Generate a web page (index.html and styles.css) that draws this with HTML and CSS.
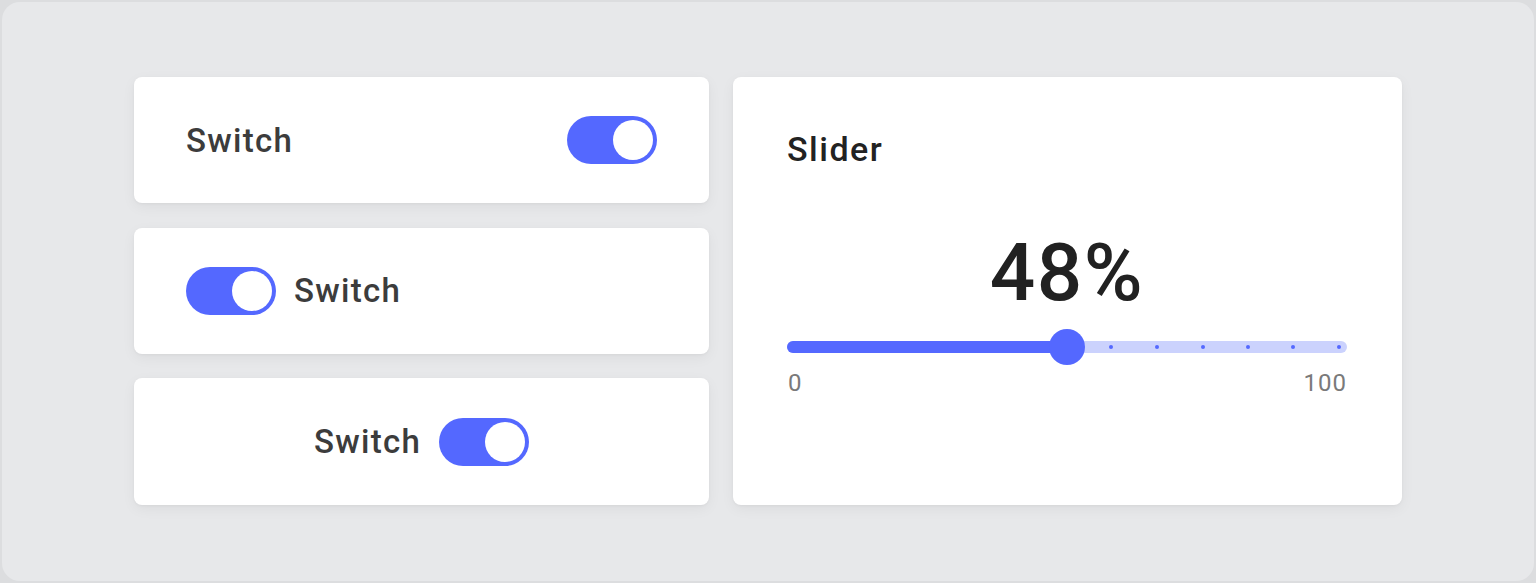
FILE: index.html
```html
<!DOCTYPE html>
<html lang="en">
<head>
<meta charset="utf-8">
<title>Switch and Slider</title>
<link rel="stylesheet" href="styles.css">
</head>
<body>
<div class="frame">
  <div class="layout">
    <div class="column">
      <div class="card row-between">
        <span class="label">Switch</span>
        <span class="toggle"><span class="knob"></span></span>
      </div>
      <div class="card row-start">
        <span class="toggle"><span class="knob"></span></span>
        <span class="label">Switch</span>
      </div>
      <div class="card row-center">
        <span class="label">Switch</span>
        <span class="toggle"><span class="knob"></span></span>
      </div>
    </div>
    <div class="card slider-card">
      <div class="title">Slider</div>
      <div class="value">48%</div>
      <div class="slider">
        <div class="track">
          <div class="fill" style="width: 50%"></div>
          <span class="dot" style="left: 57.9%"></span>
          <span class="dot" style="left: 66.1%"></span>
          <span class="dot" style="left: 74.2%"></span>
          <span class="dot" style="left: 82.3%"></span>
          <span class="dot" style="left: 90.4%"></span>
          <span class="dot" style="left: 98.6%"></span>
          <span class="thumb" style="left: 50%"></span>
        </div>
        <div class="scale"><span>0</span><span>100</span></div>
      </div>
    </div>
  </div>
</div>
</body>
</html>
```

FILE: styles.css
```css
html, body {
  margin: 0;
  padding: 0;
}
body {
  background: #dcdddf;
  font-family: Roboto, "Liberation Sans", Arial, sans-serif;
  width: 1536px;
  height: 583px;
  padding: 2px;
  box-sizing: border-box;
}
.frame {
  height: 579px;
  background: #e7e8ea;
  border-radius: 18px;
  box-sizing: border-box;
  padding: 75px 130px 0 132px;
}
.layout {
  display: flex;
  gap: 24px;
  height: 428px;
}
.column {
  width: 575px;
  display: grid;
  grid-template-rows: 126px 126px 127px;
  row-gap: 24.5px;
}
.card {
  background: #ffffff;
  border-radius: 8px;
  box-shadow: 0 4px 14px rgba(0, 0, 0, 0.05), 0 1px 3px rgba(0, 0, 0, 0.04);
  box-sizing: border-box;
}
.row-between {
  display: flex;
  align-items: center;
  justify-content: space-between;
  padding: 0 52px;
}
.row-start {
  display: flex;
  align-items: center;
  gap: 18px;
  padding: 0 52px;
}
.row-center {
  display: flex;
  align-items: center;
  justify-content: center;
  gap: 18px;
}
.label {
  font-size: 33px;
  font-weight: 500;
  color: #3c3c3c;
  letter-spacing: 1.3px;
}
.toggle {
  width: 90px;
  height: 48px;
  border-radius: 24px;
  background: #5468ff;
  display: flex;
  justify-content: flex-end;
  align-items: center;
  padding: 4px;
  box-sizing: border-box;
}
.knob {
  width: 40px;
  height: 40px;
  border-radius: 50%;
  background: #ffffff;
}
.slider-card {
  width: 669px;
  padding: 52px 55px 0 54px;
}
.title {
  font-size: 34px;
  font-weight: 500;
  color: #222222;
  line-height: 40px;
  letter-spacing: 1.5px;
}
.value {
  text-align: center;
  font-size: 80px;
  font-weight: 500;
  color: #212121;
  line-height: 100px;
  margin-top: 54px;
  letter-spacing: 1.5px;
}
.slider {
  margin-top: 18px;
}
.track {
  position: relative;
  height: 12px;
  border-radius: 6px;
  background: #cbd2fd;
}
.fill {
  height: 12px;
  border-radius: 6px;
  background: #5468ff;
}
.dot {
  position: absolute;
  top: 4px;
  width: 4px;
  height: 4px;
  margin-left: -2px;
  border-radius: 50%;
  background: #5468ff;
}
.thumb {
  position: absolute;
  top: -12px;
  width: 36px;
  height: 36px;
  margin-left: -18px;
  border-radius: 50%;
  background: #5468ff;
}
.scale {
  display: flex;
  justify-content: space-between;
  margin-top: 16px;
  font-size: 24px;
  line-height: 28px;
  color: #7a7a7a;
  letter-spacing: 1px;
  padding-left: 1px;
}
```
